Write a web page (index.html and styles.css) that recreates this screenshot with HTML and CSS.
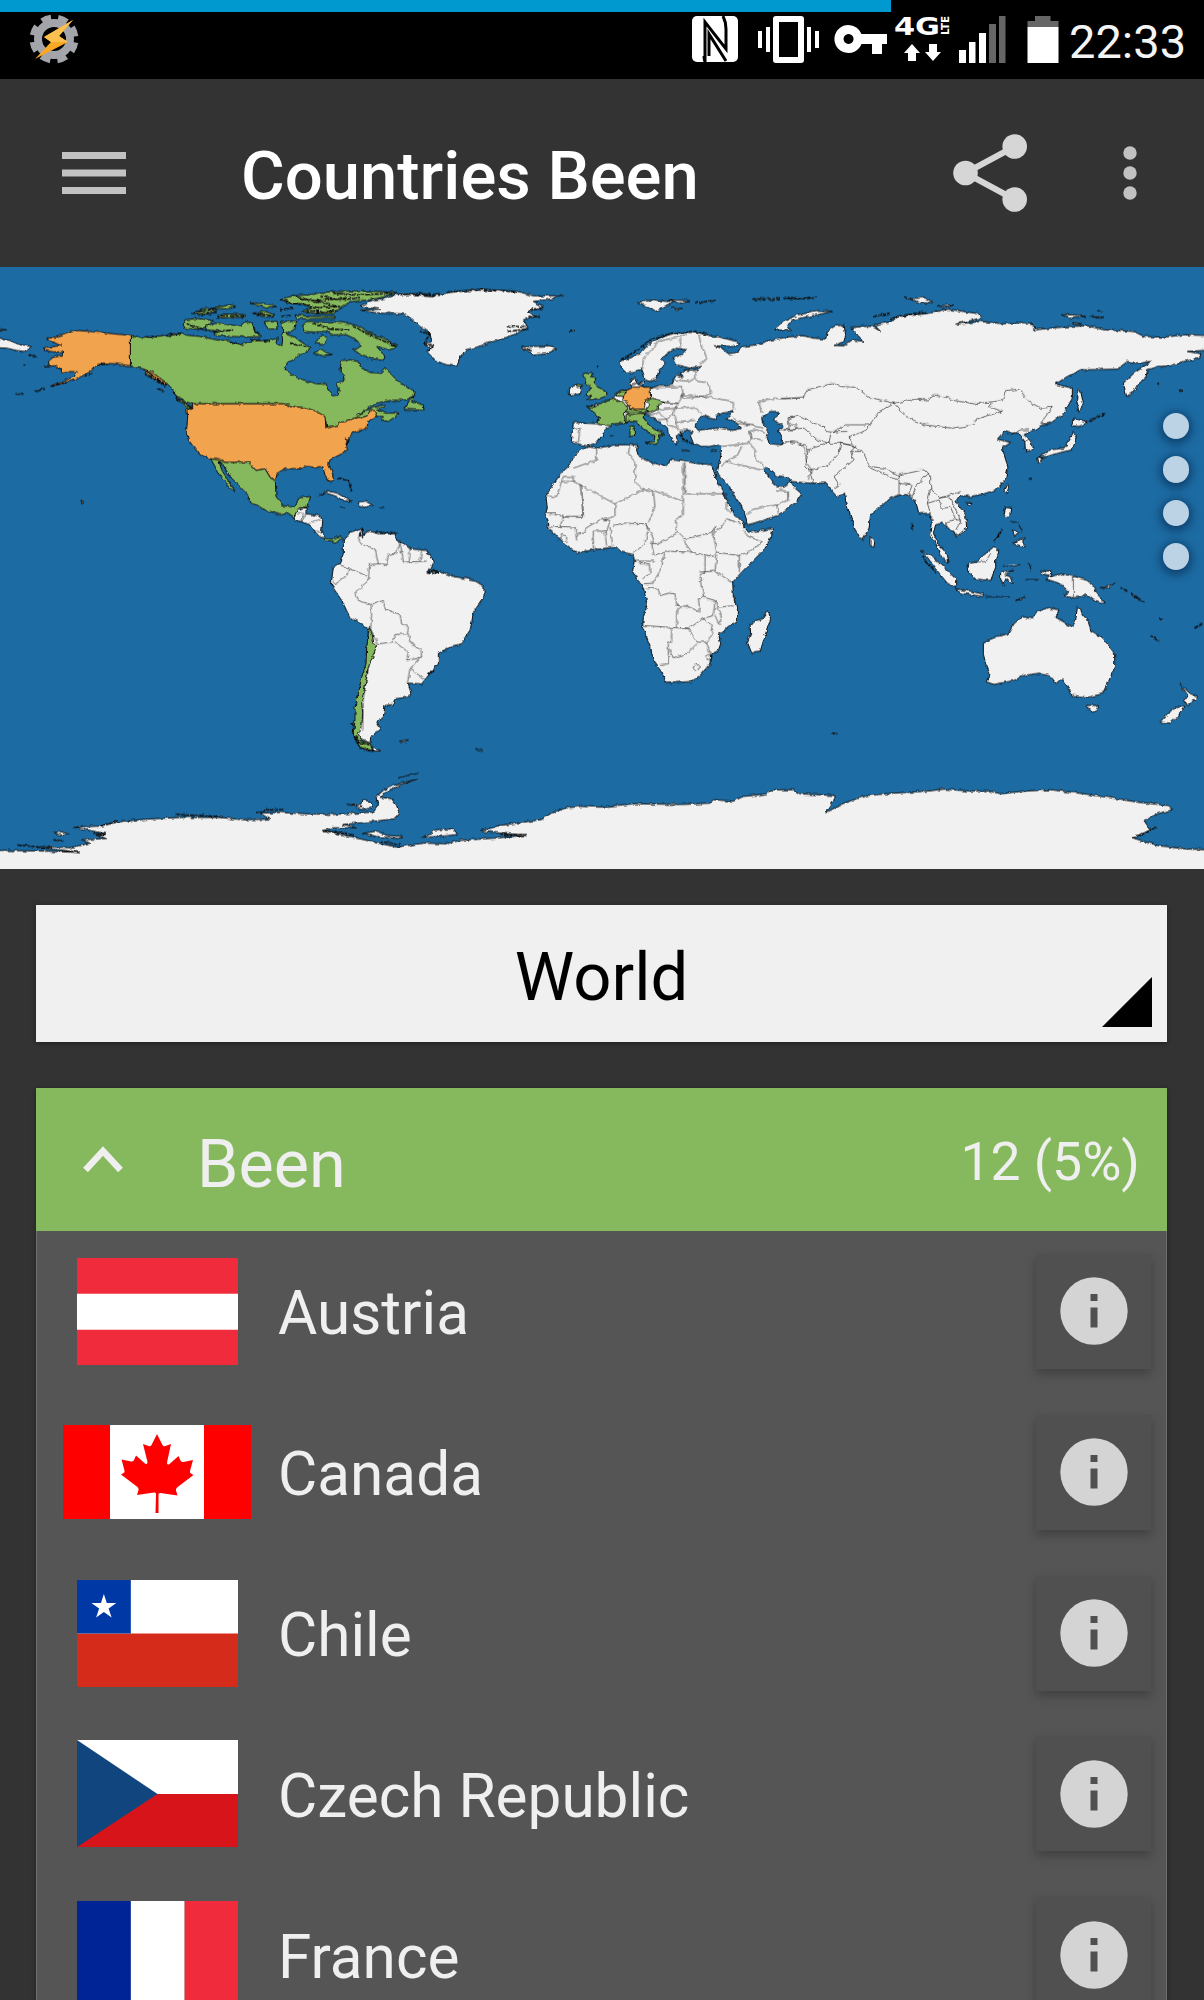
FILE: index.html
```html
<!DOCTYPE html>
<html lang="en">
<head>
<meta charset="utf-8">
<title>Countries Been</title>
<link rel="stylesheet" href="styles.css">
</head>
<body>
<div class="screen">
  <header class="status">
    <div class="progress"></div>
    <svg class="gear" width="50" height="50" viewBox="-25 -25 50 50">
      <circle r="16" fill="none" stroke="#a3a5aa" stroke-width="8"/>
      <circle r="21.500" fill="none" stroke="#a3a5aa" stroke-width="6" stroke-dasharray="9.600 7.286" stroke-dashoffset="-3.600"/>
      <path d="M19-19-10-2-3 3-19 20 14 3 5-3Z" fill="#f9a825"/>
      <path d="M19-19-10-2-3 3 14 3 5-3Z" fill="#fbc04d"/>
    </svg>
    <svg class="indicators" width="376" height="60" viewBox="690 4 376 60">
      <rect x="692" y="16" width="46" height="46" rx="5" fill="#fff"/>
      <path d="M705 62V22l21 27V29q0-7-3-13M705 62q-1-3-1-6M709 56V34l17 27" fill="none" stroke="#000" stroke-width="3"/>
      <g fill="#fff">
        <path d="M758 31h4v17h-4zM766 27h4v25h-4zM807 27h4v25h-4zM815 31h4v17h-4z"/>
        <path fill-rule="evenodd" d="M776 16h25q3 0 3 3v41q0 3-3 3h-25q-3 0-3-3V19q0-3 3-3ZM779 22v35h19V22Z"/>
        <path fill-rule="evenodd" d="M848.500 25a14 14 0 0 1 13 9H887v10h-5v10h-10V44h-10.500a14 14 0 1 1-13-19Zm0 9a5 5 0 1 0 .1 0Z"/>
        <path d="M912 44l8 9h-4v8h-8v-8h-4zM933 61l8-9h-4v-8h-8v8h-4z"/>
        <path d="M959 50h7v13h-7zM969 42h6.500v21H969zM979 33h7v30h-7zM1027.500 27h31v36h-31z"/>
        <text class="network" x="894" y="35" textLength="46" lengthAdjust="spacingAndGlyphs">4G</text>
        <text class="lte" transform="translate(948.500 35) rotate(-90)" textLength="19" lengthAdjust="spacingAndGlyphs">LTE</text>
      </g>
      <path d="M989 24h7v39h-7zM999 16h6.500v47H999zM1035 16h15.500v5h8v6h-31v-6h7.500z" fill="#666"/>
    </svg>
    <span class="clock">22:33</span>
  </header>

  <nav class="appbar">
    <svg width="64" height="44" viewBox="0 0 64 44" fill="#c2c2c2"><path d="M0 1h64v7H0zM0 18.500h64v7H0zM0 36h64v7H0z"/></svg>
    <h1 class="title">Countries Been</h1>
    <svg class="share" width="76" height="80" viewBox="0 0 76 80"><path d="M61.700 13.500 12.500 40l49.200 26.500" fill="none" stroke="#d6d6d6" stroke-width="6"/><g fill="#d6d6d6"><circle cx="61.700" cy="13.500" r="12.300"/><circle cx="12.500" cy="40" r="12.300"/><circle cx="61.700" cy="66.500" r="12.300"/></g></svg>
    <svg width="14" height="56" viewBox="0 0 14 56" fill="#c2c2c2"><circle cx="7" cy="8" r="6.700"/><circle cx="7" cy="28" r="6.700"/><circle cx="7" cy="48" r="6.700"/></svg>
  </nav>

  <section class="map">
    <svg class="world" width="1204" height="602" viewBox="0 266.500 1204 602">
      <defs>
        <filter id="coast" x="-2%" y="0" width="104%" height="104%"><feTurbulence type="fractalNoise" baseFrequency="0.2" numOctaves="2" seed="4"/><feDisplacementMap in="SourceGraphic" scale="4" xChannelSelector="R" yChannelSelector="G"/></filter>
      </defs>
      <g filter="url(#coast)">
      <!-- Antarctica -->
      <g class="land" transform="translate(300 500) scale(.33333)">
        <path d="M-930 1049-766 1052-660 1056-740 1046-780 1038-690 1042-630 1028-655 1018-580 1014-610 1004-580 1000-640 988-680 980-600 977-550 965-460 956-360 951-240 951-170 958-90 956-120 938-60 936 18 940 100 942 220 935 235 915 228 890 250 870 280 855 350 836 300 854 250 880 240 890 275 895 290 915 298 940 285 955 200 965 130 972 170 982 100 982 70 990 130 1003 200 1020 290 1040 370 1028 440 1030 480 1020 600 1012 680 1004 600 998 540 992 600 975 720 958 760 935 800 922 840 918 900 920 1000 910 1150 912 1230 908 1240 898 1300 902 1330 888 1400 880 1420 868 1480 868 1500 880 1602 885 1602 900 1577 937 1632 908 1702 885 1782 878 1882 872 1932 866 2012 872 2062 870 2102 880 2172 872 2252 868 2352 880 2452 895 2512 905 2602 915 2617 928 2572 940 2532 960 2552 990 2512 1005 2497 1012 2572 1035 2652 1045 2740 1049V1150H-930Z"/>
        <path d="M365 1010 395 1000 405 988 460 985 472 1002 420 1008ZM150 910 185 912 190 898 215 905 215 922 185 928ZM190 998 230 992 260 1005 308 1008 295 1014 230 1008ZM-740 996-715 994-692 1002-720 1004Z"/>
        <path class="rough" d="M-845 1034l60 6 40 4M-740 1018l30 4M-720 1050l60 6M-600 974l30-4 20-8M-620 998l40 6M-370 942l30 2 60 2 50 4M-130 936l30-8 50 0M140 912l50 6M80 992l80 12M240 1022l60 12M600 1003l80 0M2497 1010l30-8 40-22"/>
      </g>
      <!-- South America and Africa -->
      <g class="land" transform="translate(300 500) scale(.33333)">
        <path d="M130 125 150 95 185 86 190 110 200 90 240 100 285 100 290 120 310 128 330 145 380 150 400 185 385 215 420 212 460 228 520 238 552 258 552 290 520 335 512 385 485 430 450 438 415 460 415 490 385 525 365 550 325 548 333 580 320 590 285 595 280 612 255 615 250 650 230 665 243 685 212 710 210 728 175 710 165 690 168 640 170 590 190 540 200 480 205 385 150 350 125 300 95 255 95 240 100 200 118 190 130 160Z"/>
        <path class="been" d="M208 380 215 395 222 430 230 435 218 470 205 500 200 530 195 560 185 600 188 640 185 680 175 700 185 722 210 728 218 750 180 742 160 705 165 660 165 620 175 580 185 530 198 490 200 440 205 400Z"/>
        <path d="M218 738 242 751 220 752ZM298 722 325 718 312 725ZM525 744 548 751M295 832 355 818"/>
        <path d="M158 670v30l22 42 40 12M150 670l14 8M382 217 400 208 418 214 400 220ZM385 522 398 508M172 725l40 8M168 708l14 22" class="rough"/>
        <path d="M1403 328 1412 355 1395 405 1380 455 1355 457 1342 425 1352 400 1350 370 1385 355Z"/>
      </g>
      <g class="land" transform="translate(400 266) scale(.33333)">
        <path d="M448 788 445 765 437 745 442 720 437 690 455 660 480 625 505 600 515 580 545 550 560 540 590 545 650 535 690 535 712 535 710 555 715 570 760 590 800 600 810 580 855 585 900 592 935 595 950 640 965 670 975 690 990 720 1000 745 1030 765 1038 788"/>
        <path d="M1032 780 1045 797 1118 787 1115 807 1090 852 1060 882 1025 917 998 947 1000 992 1012 1022 1012 1062 980 1087 955 1102 962 1132 955 1152 932 1164 930 1192 900 1227 875 1245 800 1250 785 1217 760 1182 752 1142 728 1082 730 1052 742 1017 730 962 710 937 698 912 703 882 700 864 665 857 650 842 600 847 530 858 495 832 470 807 445 787 440 777"/>
      </g>
      <!-- Eurasia, western half -->
      <g class="land" transform="translate(400 266) scale(.33333)">
        <path d="M1204 208 1160 212 1110 222 1070 235 1030 240 1010 258 985 262 965 245 940 238 1000 240 1020 232 1010 225 960 212 930 208 900 200 880 195 850 200 820 200 780 215 745 235 720 262 690 275 660 285 665 305 680 320 700 318 725 308 732 325 735 340 750 345 770 338 778 310 795 290 785 280 800 262 830 245 860 250 850 262 820 275 830 295 870 305 905 300 890 310 855 310 840 320 850 335 830 325 820 340 818 355 800 358 775 358 750 365 730 360 715 355 705 345 712 338 705 332 690 340 693 355 700 362 680 372 665 370 650 380 640 395 620 403 600 412 585 412 585 420 560 420 572 430 590 440 598 455 592 472 520 468 518 485 514 525 522 530 545 535 560 538 590 528 605 510 615 490 635 478 640 472 678 470 690 462 710 465 720 480 745 495 765 508 768 525 760 533 778 518 775 505 795 503 780 492 765 490 745 475 732 455 735 442 745 445 760 455 790 475 803 488 805 500 820 520 828 535 835 525 825 512 845 496 868 492 880 495 870 505 880 530 905 540 930 540 950 535 965 540 962 570 955 600 952 620 980 650 1005 690 1025 720 1035 745 1042 775 1080 765 1130 748 1165 725 1190 705 1205 682 1185 665 1172 645 1150 662 1125 660 1115 640 1088 605 1100 600 1130 628 1165 632 1175 645 1204 648"/>
        <path d="M365 242 400 240 450 238 468 248 440 262 400 266 390 255 370 252ZM712 108 760 100 800 105 825 106 800 116 770 135 745 122ZM800 100 870 103 840 110ZM815 122 850 127 830 129ZM690 345 705 335 710 350 695 358ZM715 348 732 345 728 355ZM508 372 508 385 540 383 545 365 525 355 515 360ZM845 550 870 554M932 555 948 550M630 508 642 508"/>
        <path class="been" d="M528 358 545 352 548 362 532 363ZM548 322 575 318 580 328 570 333 588 335 582 348 600 365 620 378 620 388 600 396 560 400 572 390 558 385 568 372 575 362 555 350 560 340 550 330ZM560 420 585 422 600 410 620 403 640 395 665 408 685 420 670 440 678 470 640 472 635 478 592 474 598 455 585 440 572 430ZM648 388 660 372 678 372 672 390ZM678 445 710 438 735 442 732 455 745 475 765 490 795 503 775 505 778 518 766 534 735 528 762 525 765 508 745 495 720 480 710 465 690 462 678 468ZM690 480 702 478 704 508 690 510ZM733 402 760 395 795 408 775 415 775 428 750 440 720 436 740 428 750 415Z"/>
        <path class="been" d="M672 434 700 428 735 428 745 436 710 442 685 445Z"/>
        <path class="lived" d="M680 372 700 362 725 362 750 362 752 395 733 402 735 418 730 428 690 428 684 410 668 402 672 385Z"/>
        <path class="sea" d="M885 478 895 455 910 447 930 455 950 460 945 448 965 440 1000 435 990 450 975 455 1010 470 1025 485 1000 492 960 485 920 488 895 492ZM1085 455 1110 435 1140 435 1130 450 1120 460 1150 480 1135 490 1148 515 1145 535 1110 532 1098 510 1105 495 1088 470Z"/>
        <path d="M-120 120-80 100-40 95-10 82 100 88 150 78 240 68 350 74 400 88 490 88 440 100 400 105 430 120 385 135 405 150 370 160 385 185 340 205 280 225 230 242 200 250 180 270 170 300 140 295 110 285 80 255 95 245 70 235 95 225 90 200 60 180 40 160 10 142-60 140-118 132-60 128Z"/>
        <path class="rough" d="M60 195l30 8-20 30 30 3-15 20M320 180h60M325 195l60-8M385 150h35M390 128h40M0 84l60-2 60 4M140 76l100-6 110 6M665 280l40-25 55-40 60-15 70-5 30 10M1060 98h80M1150 94l50 2 50-4M510 193l15-1M590 300l5 1M840 500l12 20 30 15M370 248l25 2M885 110l60-8"/>
      </g>
      <!-- Eurasia, eastern half, Japan and Southeast Asia -->
      <g class="land" transform="translate(784 266) scale(.33333)">
        <path d="M46 208 60 208 90 215 125 218 130 195 150 180 180 175 185 205 180 225 150 237 180 238 205 220 240 225 215 200 200 185 235 180 265 180 290 195 270 175 300 170 325 165 340 150 400 145 450 138 490 128 585 142 590 155 515 173 590 165 620 168 660 172 700 168 740 170 755 190 800 185 860 180 910 178 960 190 1050 195 1080 210 1140 212 1200 205 1290 208V250L1210 255 1250 262 1248 275 1200 285 1160 298 1120 300 1090 310 1085 335 1060 355 1050 375 1028 390 1018 350 1050 320 1080 300 1100 285 1070 290 1030 285 1000 308 890 310 850 330 815 353 865 365 865 395 840 440 800 470 775 475 750 490 720 505 735 520 750 545 725 556 722 525 705 500 680 500 660 495 640 518 680 528 655 545 665 580 672 600 665 640 635 670 600 682 560 690 540 688 525 690 515 705 545 745 548 785 515 812 510 795 485 780 475 770 455 775 448 800 465 835 490 865 495 888 470 870 455 830 440 805 445 770 435 740 405 742 395 705 375 685 345 685 320 695 290 720 260 745 255 785 235 822 215 795 200 750 185 705 182 680 160 692 145 675 125 650 75 650 46 647"/>
        <path d="M880 370 890 375 898 410 885 440 878 400ZM872 455 910 468 885 480 865 478ZM868 495 877 515 865 550 820 560 790 570 765 570 800 550 840 545 860 515ZM760 572 775 575 765 590ZM668 655 675 660 668 682 660 670ZM548 708 565 710 555 720ZM258 810 272 825 270 842 258 840ZM-28 190 0 165 40 145 100 135 145 135 90 147 35 158 10 175 20 192ZM380 97 420 93 450 108 410 110ZM460 118 510 115 490 122ZM832 145 870 145 905 150 860 155ZM920 150 960 153 940 155ZM865 168 895 172 875 174ZM665 720 680 722 678 745 668 755 660 745ZM700 825 720 812 720 842 700 835 685 830ZM682 765 700 770M685 790 705 800 692 810ZM705 775 714 795"/>
        <path class="rough" d="M915 465l50-25M0 95h80M360 92l30 8M320 160l30-12 80-12M270 150l50-10M740 172l15 18M630 825l25-35M385 770v18M1120 350l5 3M1185 373h10M735 638l6-2M940 135h15"/>
        <path d="M412 850 440 867 480 902 515 937 515 964 490 950 455 907 430 872ZM515 967 560 974 600 984 595 990 530 980ZM550 892 575 887 610 857 630 840 645 852 635 877 635 902 620 942 570 937 555 917ZM650 917 690 912 662 924 680 932 688 954 665 937 658 960 650 937ZM660 897 685 900 710 894M695 1002 725 990 710 1000ZM605 990 680 992M725 939 765 940M735 890 742 910M770 912 800 914 800 930 835 922 870 930 910 942 935 967 930 972 965 1010 930 1002 905 982 890 992 865 994 840 987 855 977 830 952 800 942 785 937 798 927 775 922ZM945 964 975 966 990 949 972 960Z"/>
        <path class="rough" d="M1010 964l20 10M1040 980l40 30M415 870l40 50M1100 1108l25 16M1125 1056h8M1235 1083l20-12M145 1400l15 2"/>
        <path d="M598 1127 640 1110 672 1102 690 1072 715 1050 745 1057 760 1037 790 1024 825 1030 815 1052 865 1082 875 1062 880 1020 890 1027 895 1047 910 1054 920 1092 945 1107 970 1132 992 1162 992 1202 975 1242 955 1282 915 1292 865 1287 855 1267 835 1237 818 1252 800 1230 765 1220 720 1227 690 1242 630 1254 610 1247 618 1222 605 1192 598 1162ZM908 1317 942 1317 935 1337 925 1340ZM1188 1252 1210 1274 1220 1282 1242 1290 1225 1307 1210 1317 1200 1297 1212 1287ZM1180 1320 1200 1322 1180 1352 1160 1370 1128 1367 1150 1342Z"/>
      </g>
      <!-- North America -->
      <g class="land" transform="translate(0 266) scale(.33333)">
        <path class="been" d="M391 207 415 213 450 211 480 212 510 205 530 200 560 206 600 210 650 220 690 225 725 233 760 222 810 222 835 215 830 232 845 240 848 222 845 200 852 188 862 205 885 212 905 228 930 240 925 255 900 262 885 278 862 288 855 310 875 325 895 335 925 345 950 352 978 352 985 372 1000 388 1015 385 1018 365 1010 352 1030 345 1035 330 1020 312 1025 282 1055 280 1080 288 1085 305 1110 318 1140 320 1155 303 1175 325 1200 350 1240 372 1245 385 1220 400 1170 402 1130 410 1100 428 1072 446 1105 430 1150 414 1158 420 1130 428 1155 440 1200 440 1165 465 1145 462 1150 450 1128 450 1118 434 1100 450 1060 455 1035 466 1015 476 980 486 978 465 965 445 920 425 880 420 850 412 578 412 555 405 525 385 520 370 500 350 480 335 455 318 430 308 391 298Z"/>
        <path class="lived" d="M391 207 340 202 280 196 237 192 205 197 178 207 168 215 140 214 150 224 185 237 165 240 135 243 133 252 160 256 188 256 187 266 165 268 145 285 148 296 133 300 165 298 180 305 182 317 205 315 232 316 222 330 200 340 165 352 158 360 200 347 232 338 250 325 275 312 290 295 315 290 345 292 391 298ZM430 308 455 316 480 335 500 350 495 355 470 343 445 325ZM578 412H850L880 420 920 425 950 435 975 450 978 486 1013 476 1015 467 1035 466 1060 455 1100 450 1108 433 1122 432 1130 448 1108 462 1100 485 1062 498 1050 512 1038 528 1042 548 1025 562 990 580 986 595 998 620 1000 645 990 648 975 625 968 600 945 602 915 600 905 608 880 606 855 606 832 620 826 642 812 635 795 607 768 612 745 587 720 588 675 588 655 580 630 577 600 565 580 540 565 520 560 490 563 450 560 425 578 430ZM243 702 252 708 245 712Z"/>
        <path class="been" d="M632 577 655 580 675 588 720 588 745 587 768 612 795 607 812 635 826 642 828 690 850 718 885 722 898 694 932 690 922 720 900 725 888 740 882 752 865 740 840 745 800 732 770 718 748 705 748 690 715 655 690 630 672 600 657 585 665 610 680 635 692 655 705 672 692 668 680 650 658 625 645 600ZM970 815 1000 818 1020 808 1035 825 1020 818 1005 828 980 824Z"/>
        <path d="M882 752 893 728 918 724 918 742 960 748 968 760 965 795 975 815 960 812 945 795 930 775 905 766 885 762ZM958 685 985 674 1010 680 1040 695 1055 704 1030 703 1010 690 980 680ZM1075 710 1100 706 1118 716 1095 722 1078 720ZM1022 722 1035 723M1138 722 1150 723M-26 215 30 222 60 235 95 240 75 255 50 252 20 245-26 243M-26 187 20 190-26 193"/>
        <path class="been" d="M555 160 590 156 640 162 620 178 600 188 555 186 550 175ZM615 178 650 170 690 175 720 180 735 165 755 170 765 195 785 210 740 212 700 210 650 208 640 200 670 195 620 190ZM575 140 620 125 650 135 620 145ZM650 155 670 142 740 145 735 152ZM640 125 690 115 710 120 680 128ZM750 110 800 112 830 120 800 125ZM758 140 800 135 825 145 800 152ZM792 168 830 165 835 185 805 188ZM845 165 890 165 885 185 870 200 848 195ZM885 145 940 150 1005 150 1005 156 890 157ZM840 98 880 88 940 84 960 78 1080 72 1190 78 1150 92 1110 100 1050 106 1020 125 1000 142 950 142 905 134 940 124 915 116 870 110ZM905 180 920 165 950 165 1000 166 1050 172 1080 180 1110 200 1150 215 1190 238 1170 250 1130 240 1155 270 1150 282 1110 275 1080 262 1060 250 1085 238 1060 215 1040 205 1000 205 975 194 950 200 915 198ZM940 260 960 250 995 265 970 268ZM945 230 965 205 985 215 970 235ZM1240 388 1235 405 1270 415 1272 432 1212 428 1225 405ZM530 400 550 402 578 428 560 422Z"/>
        <path class="rough" d="M440 312l30 25 30 18M435 322l35 20 25 16M475 365l15 12M520 375l10 20 45 30M105 375l30-8M50 382h20M155 358l45-12M70 297h8M85 265l25 5M255 328l22-5M900 96l60 10 50 14M880 88l60 15 100-8M930 125l90-5M950 140l60-8M840 98l40 12 50 6M960 90l60 8 60-2M1000 80l70 6 110-6M920 133l80 4M580 138l70-10M590 144l60-6M760 140l60 8M650 148l90 0M840 130l40-5M845 150l30-3M1060 180l60 30 65 28M940 170l50 18 60 2M1015 635l30 8 10 30M1035 515l12 6-10 12M1090 788l-10 12v12l8-10M1125 798h70M290 295l40-3M640 195l60-4M560 172l60 20M440 212l60-4 50-8M690 226l35 8M750 220l60 4M870 230l50 12M760 185l18 20"/>
      </g>
      <!-- Country borders -->
      <g class="borders">
        <g transform="translate(0 266) scale(.33333)"><path d="M893 738 912 742 900 766M918 742 905 766M930 768 962 760M945 795H965"/></g>
        <g transform="translate(300 500) scale(.33333)">
          <path d="M185 90 175 112 185 132 225 145 235 190 260 192 265 162 290 158 300 128 305 150 310 185 380 182M300 150 310 155M330 145 328 185M365 150 360 182M235 190 208 192 205 240 180 262 165 280 175 300 212 312 250 300 255 325 300 342 305 368 325 382 322 400 285 402 275 425 235 430 222 410 212 385 215 340 212 312M118 192 150 205 205 228M150 205 140 228 105 250 102 240M285 425 325 455 320 478 350 475 365 465 362 445 330 425 325 400M365 465 330 505 372 535M330 505 322 548M205 510 195 560 190 600 188 690"/>
          <path d="M738 40 775 40 790 50H850L845-48M790 50 780 78 740 80M780 78 825 80 830 120M775 120 785 102 800 108 800 125M830 102 850 98 862 80 905 55 930 60 920 92H880V150M915 92 920 138M938 135 930 80M940 75 970 68 1040 70 1045 80 1035 130 1000 158M1040 70 1060 115 1055 130 1080 128 1135 95 1155 115 1200 105 1235 95 1245 75 1240 100 1265 78 1280 55 1325 70M1055 130 1062 165 1095 152 1175 155 1150 120M1175 155 1240 168 1250 155 1240 100M1250 155 1315 165 1345 155 1388 125 1345 108 1330 90M1318 165V215M1065 182H1003M1020 182V190H1048L1050 220 1025 235M1095 152 1085 200 1060 248 1030 250M1035 262H1072L1082 285 1105 278 1125 280 1130 315 1165 318 1200 335 1195 295 1210 290 1205 245 1198 225 1215 215 1215 165M1198 215 1245 212 1250 165M1245 212 1300 248M1210 235 1200 245M1210 290 1245 300 1255 320 1308 315M1245 300 1240 345 1208 355 1165 385 1130 380V330L1145 318M1030 375 1130 382 1165 382 1190 425 1220 425 1238 400 1235 370 1208 355M1115 385V425H1105V490L1080 492M1108 445 1120 472 1160 460 1190 430M1220 425 1232 465M1215 468 1225 462 1235 470 1225 478ZM1178 500 1190 488 1202 500 1185 512ZM1250 320 1265 350 1258 372 1245 345"/>
        </g>
        <g transform="translate(400 266) scale(.33333)">
          <path d="M520 630H490L470 690H437M520 630V645L645 712 730 670 705 645V590L685 560 690 535M520 605 590 580 590 545M520 645H485M540 650 550 750H487M645 712 645 750 610 760M730 670 760 672 850 705V590M855 590V682H980M850 705V745L830 755 828 795M760 672 765 720 745 770M980 682 978 725 1000 745M965 540 1005 535 1050 530 1065 550 1065 575 1090 600M1025 540 1010 570 975 585 965 600M975 585 1090 612M1042 745 1060 728 1130 715 1165 700 1162 675M1130 715 1135 740M1165 700V675L1130 670M1050 530 1055 505 1045 495 1070 490 1095 500M1010 470 1060 478 1090 485M1045 495 1055 515 1085 520"/>
          <path d="M728 308 730 275 755 250 775 225 840 210 860 205M845 250 840 215M895 205 905 235 920 275 900 295M750 365 845 360 850 385 835 410 795 408M820 340 870 345 885 335M850 310 885 315 890 345 920 348 935 380 915 390 845 385M845 385 850 395 915 390 1000 405 1000 430M795 408 835 412 825 425 780 430 775 420M825 425 820 445 800 458 765 460M825 425 880 422 905 442M820 445 830 465 885 462M830 465 835 492 865 490M800 458 805 480 830 485M678 440 710 435 735 442M640 395 665 408M520 485 540 485 535 530M745 445 780 440 800 458M765 460 775 470"/>
          <path d="M1000 455 1030 470 1060 475M1085 440 1075 405 1125 395 1150 398 1210 392M1145 490 1185 490 1190 475 1165 470V455L1195 448M1145 530 1190 525 1215 545 1220 590 1235 610 1225 640"/>
        </g>
        <g transform="translate(784 266) scale(.33333)">
          <path d="M-8 395H55L70 370 150 350 170 360 215 362 255 392 330 410 395 398 435 400 445 385 480 390 510 402 570 412 655 402 665 372 705 368 735 405 770 425 805 422 770 470 800 472M330 410 365 450 420 475 505 485 570 475 575 458 655 435 615 420 622 408M330 410 285 435 260 470 250 490 195 510 210 540 240 560 250 590 260 605 340 640 345 625 370 620 420 610 440 630 440 665 465 695 530 675M260 600 300 605 345 630M15 490V455L40 448 90 470 120 480 130 495 160 500M0 490 60 485 100 520 135 530 140 500 185 475 260 475M0 525 65 535 72 550 130 530 170 530 200 535M72 550 65 600 75 610 130 600 165 560 170 530M75 610 88 650M200 555 210 580 150 630 165 655 150 665M170 530 215 540 200 555H230M345 640V680M345 650 385 655 375 680 385 690 395 660 430 620M440 665 430 710 445 760M430 710 465 700 475 725 500 722 515 760 485 765 485 785M465 695 495 690 520 740 530 765 515 790M515 760H530M680 505 710 490 735 490M722 525 745 518M150 495 190 495M460 835 480 845M570 887 605 885 620 860M868 930V994"/>
        </g>
      </g>
      </g>
    </svg>
    <div class="dots"><i></i><i></i><i></i><i></i></div>
  </section>

  <main class="content">
    <div class="spinner"><span>World</span><svg class="corner" width="50" height="50" viewBox="0 0 50 50"><path d="M50 0v50H0z"/></svg></div>
    <section class="card">
      <div class="card-head">
        <svg width="42" height="28" viewBox="0 0 42 28"><path d="M3.500 24 21 5l17.500 19" fill="none" stroke="#efefef" stroke-width="6.500"/></svg>
        <h2>Been</h2>
        <span class="count">12 (5%)</span>
      </div>
      <div class="row">
        <div class="flag"><svg width="161" height="107" viewBox="0 0 160 107" preserveAspectRatio="none"><path fill="#f02b3b" d="M0 0h160v107H0z"/><path fill="#fff" d="M0 35.700h160v36H0z"/></svg></div>
        <span class="name">Austria</span>
        <button class="info"><svg width="68" height="68" viewBox="0 0 68 68"><circle cx="34" cy="34" r="33.700" fill="#d4d4d4"/><path fill="#505050" d="M30.500 17h7v7h-7zM30.500 30.500h7v20h-7z"/></svg></button>
      </div>
      <div class="row">
        <div class="flag"><svg width="188" height="94" viewBox="0 0 188 94"><path fill="#f00" d="M0 0h188v94H0z"/><path fill="#fff" d="M47 0h94v94H47z"/><path fill="#f00" d="M94 9 99.500 20q1 2 3 1l5.500-2-4 18.500q0 3 2.500 1.500l9-8 2 4.500q1 2 3 1.500l9.500-2-3 11q-.5 2 1 2.500l2.500 1.500-16.500 12.500q-1.500 1.500-1 3l1.500 5-17-2.500q-2-.5-2 1.500L95.500 88h-3L93 69q0-2-2-1.500L74 70l1.500-5q.5-1.500-1-3L58 49.500l2.500-1.500q1.500-.5 1-2.500l-3-11 9.500 2q2 .5 3-1.500l2-4.500 9 8q2.500 1.500 2.500-1.500L80 19l5.500 2q2 1 3-1Z"/></svg></div>
        <span class="name">Canada</span>
        <button class="info"><svg width="68" height="68" viewBox="0 0 68 68"><circle cx="34" cy="34" r="33.700" fill="#d4d4d4"/><path fill="#505050" d="M30.500 17h7v7h-7zM30.500 30.500h7v20h-7z"/></svg></button>
      </div>
      <div class="row">
        <div class="flag"><svg width="161" height="107" viewBox="0 0 160 107" preserveAspectRatio="none"><path fill="#fff" d="M0 0h160v54H0z"/><path fill="#d52b1a" d="M0 53.500h160V107H0z"/><path fill="#0039a6" d="M0 0h53.500v53.500H0z"/><path fill="#fff" d="m26.700 14 2.900 9h9.500l-7.700 5.600 3 9-7.700-5.600-7.700 5.600 3-9-7.700-5.600h9.500z"/></svg></div>
        <span class="name">Chile</span>
        <button class="info"><svg width="68" height="68" viewBox="0 0 68 68"><circle cx="34" cy="34" r="33.700" fill="#d4d4d4"/><path fill="#505050" d="M30.500 17h7v7h-7zM30.500 30.500h7v20h-7z"/></svg></button>
      </div>
      <div class="row">
        <div class="flag"><svg width="161" height="107" viewBox="0 0 160 107" preserveAspectRatio="none"><path fill="#fff" d="M0 0h160v54H0z"/><path fill="#d7141a" d="M0 54h160v53H0z"/><path fill="#11457e" d="m0 0 80 54L0 107z"/></svg></div>
        <span class="name">Czech Republic</span>
        <button class="info"><svg width="68" height="68" viewBox="0 0 68 68"><circle cx="34" cy="34" r="33.700" fill="#d4d4d4"/><path fill="#505050" d="M30.500 17h7v7h-7zM30.500 30.500h7v20h-7z"/></svg></button>
      </div>
      <div class="row">
        <div class="flag"><svg width="161" height="107" viewBox="0 0 160 107" preserveAspectRatio="none"><path fill="#002395" d="M0 0h54v107H0z"/><path fill="#fff" d="M53.500 0H107v107H53.500z"/><path fill="#f02b3b" d="M107 0h53v107h-53z"/></svg></div>
        <span class="name">France</span>
        <button class="info"><svg width="68" height="68" viewBox="0 0 68 68"><circle cx="34" cy="34" r="33.700" fill="#d4d4d4"/><path fill="#505050" d="M30.500 17h7v7h-7zM30.500 30.500h7v20h-7z"/></svg></button>
      </div>
    </section>
  </main>
</div>
</body>
</html>
```
FILE: styles.css
```css
* { box-sizing: border-box; margin: 0; }
body { background: #333; font-family: Roboto, "Liberation Sans", sans-serif; }
svg { display: block; flex: none; }
.screen { width: 1204px; height: 2000px; overflow: hidden; }

.status { position: relative; height: 79px; background: #000; display: flex; align-items: flex-start; padding: 14px 21px 0 29px; }
.progress { position: absolute; left: 0; top: 0; width: 891px; height: 12px; background: #0099cf; }
.indicators { margin: -10px 0 0 auto; }
.network { font: 700 25px "DejaVu Sans", sans-serif; }
.lte { font: 700 10px "DejaVu Sans", sans-serif; }
.clock { width: 117px; padding-left: 3px; color: #f4f4f4; font-size: 47px; line-height: 55px; white-space: nowrap; }

.appbar { height: 187.500px; display: flex; align-items: center; padding: 0 67px 0 62px; }
.title { margin-left: 115px; padding-top: 7px; color: #fff; font-weight: 500; font-size: 67px; line-height: 80px; white-space: nowrap; }
.share { margin-left: auto; margin-right: 94px; }

.map { position: relative; height: 602px; background: #1c6ba3; overflow: hidden; }
.land { fill: #f1f1f1; stroke: #111; stroke-width: 3; stroke-linejoin: round; }
.been { fill: #86b95d; }
.lived { fill: #f1a34e; }
.sea { fill: #1c6ba3; }
.rough { fill: none; stroke-width: 5; stroke-dasharray: 9 3 14 2; }
.borders { fill: none; stroke: #222; stroke-width: 2; }
.dots { position: absolute; right: 15px; top: 146px; display: grid; gap: 17px; }
.dots i { width: 26.500px; height: 26.500px; border-radius: 50%; background: #bcd3e5; box-shadow: 0 2px 8px 3px rgba(0, 25, 60, .5); }

.content { padding: 36px 37px 0 36px; }
.spinner { position: relative; height: 137.500px; display: flex; align-items: center; justify-content: center; background: #f0f0f0; color: #000; font-size: 67px; line-height: 80px; box-shadow: 0 1px 5px rgba(0, 0, 0, .4); padding-top: 8px; }
.corner { position: absolute; right: 15.500px; bottom: 15.500px; }
.card { margin-top: 46px; height: 1000px; background: #555; box-shadow: 0 1px 5px rgba(0, 0, 0, .4), inset 0 0 0 1px #707070; }
.card-head { height: 143px; display: flex; align-items: center; padding: 0 27px 0 46px; background: #86b95d; color: #efefef; }
.card-head h2 { margin-left: 73px; padding-top: 8px; font-weight: 400; font-size: 66.500px; line-height: 80px; }
.count { margin-left: auto; padding-top: 4px; font-size: 53.500px; }
.row { height: 160.850px; display: flex; align-items: center; padding-right: 16px; }
.flag { width: 242px; display: flex; justify-content: center; }
.name { padding-top: 6px; color: #efefef; font-size: 60.300px; line-height: 72px; white-space: nowrap; }
.info { margin-left: auto; width: 115px; height: 115px; border: 0; padding: 0; background: #505050; display: grid; place-items: center; box-shadow: 0 5px 10px rgba(0, 0, 0, .25); }
```
